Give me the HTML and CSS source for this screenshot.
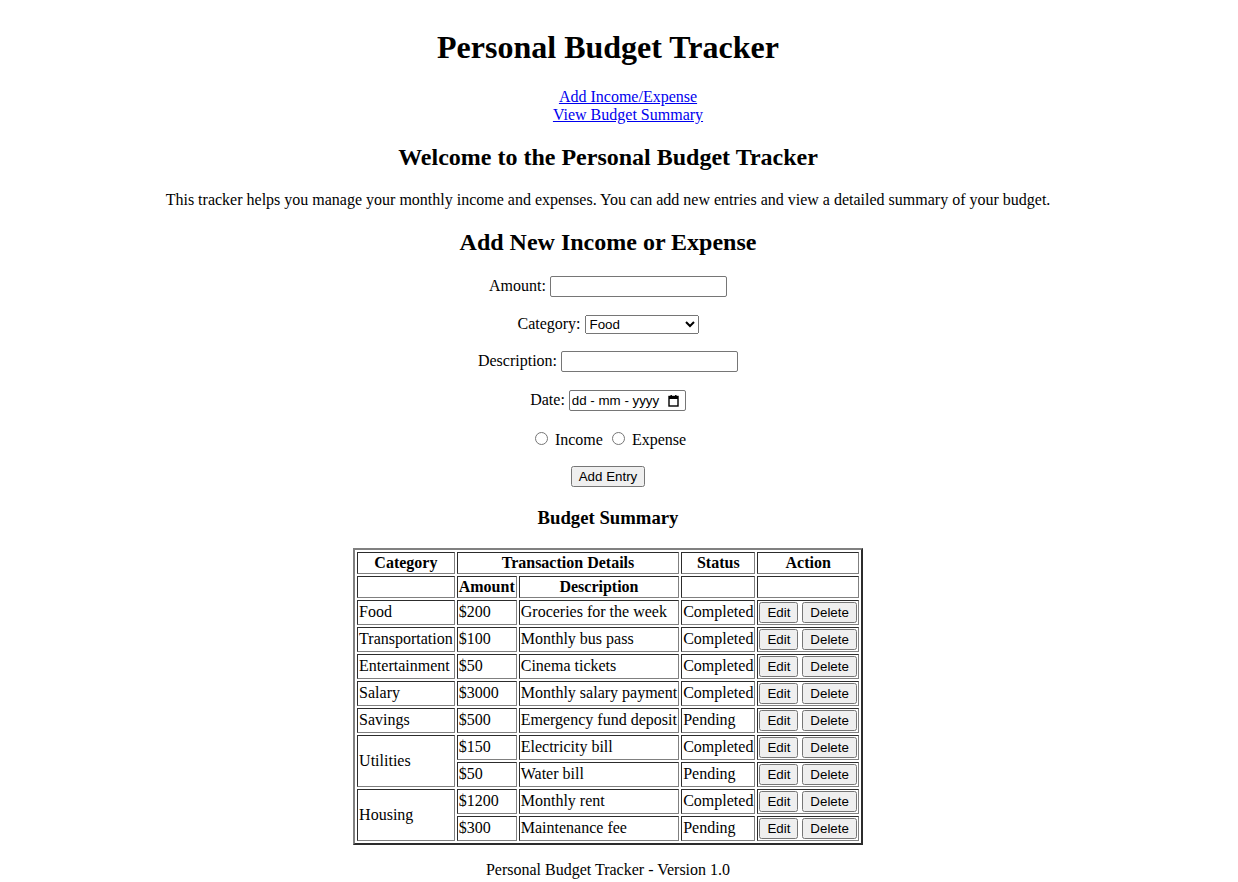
FILE: index.html
```html
<!DOCTYPE html>
<html>
<head>
<meta charset="utf-8">
<title>Personal Budget Tracker</title>
<link rel="stylesheet" href="styles.css">
</head>
<body>
<header>
<h1>Personal Budget Tracker</h1>
<nav>
<ul class="nav-list">
<li><a href="#add">Add Income/Expense</a></li>
<li><a href="#summary">View Budget Summary</a></li>
</ul>
</nav>
</header>
<main>
<section>
<h2>Welcome to the Personal Budget Tracker</h2>
<p>This tracker helps you manage your monthly income and expenses. You can add new entries and view a detailed summary of your budget.</p>
</section>
<section id="add">
<h2>Add New Income or Expense</h2>
<form>
<p class="form-row"><label for="amount">Amount:</label> <input class="text-input" type="text" id="amount"></p>
<p class="form-row"><label for="category">Category:</label> <select class="select-input" id="category">
<option>Food</option>
<option>Transportation</option>
<option>Entertainment</option>
<option>Salary</option>
<option>Savings</option>
<option>Utilities</option>
<option>Housing</option>
</select></p>
<p class="form-row"><label for="desc">Description:</label> <input class="text-input" type="text" id="desc"></p>
<p class="form-row"><label for="date">Date:</label> <span class="date-field"><input class="date-input" type="text" id="date" placeholder="dd - mm - yyyy"><svg class="cal-icon" width="11" height="12" viewBox="0 0 11 12"><rect x="1" y="1.5" width="9" height="9.5" fill="none" stroke="#000" stroke-width="1.4"/><rect x="1" y="1.5" width="9" height="2.5" fill="#000"/><rect x="2.5" y="0" width="1.4" height="2" fill="#000"/><rect x="7.1" y="0" width="1.4" height="2" fill="#000"/></svg></span></p>
<p class="form-row"><input type="radio" name="type" id="inc"> <label for="inc">Income</label> <input type="radio" name="type" id="exp"> <label for="exp">Expense</label></p>
<p class="form-row"><button class="btn" type="button">Add Entry</button></p>
</form>
</section>
<section id="summary">
<h3>Budget Summary</h3>
<table class="budget">
<thead>
<tr><th>Category</th><th colspan="2">Transaction Details</th><th>Status</th><th>Action</th></tr>
<tr><th></th><th>Amount</th><th>Description</th><th></th><th></th></tr>
</thead>
<tbody>
<tr><td>Food</td><td>$200</td><td>Groceries for the week</td><td>Completed</td><td><button class="btn">Edit</button> <button class="btn">Delete</button></td></tr>
<tr><td>Transportation</td><td>$100</td><td>Monthly bus pass</td><td>Completed</td><td><button class="btn">Edit</button> <button class="btn">Delete</button></td></tr>
<tr><td>Entertainment</td><td>$50</td><td>Cinema tickets</td><td>Completed</td><td><button class="btn">Edit</button> <button class="btn">Delete</button></td></tr>
<tr><td>Salary</td><td>$3000</td><td>Monthly salary payment</td><td>Completed</td><td><button class="btn">Edit</button> <button class="btn">Delete</button></td></tr>
<tr><td>Savings</td><td>$500</td><td>Emergency fund deposit</td><td>Pending</td><td><button class="btn">Edit</button> <button class="btn">Delete</button></td></tr>
<tr><td rowspan="2">Utilities</td><td>$150</td><td>Electricity bill</td><td>Completed</td><td><button class="btn">Edit</button> <button class="btn">Delete</button></td></tr>
<tr><td>$50</td><td>Water bill</td><td>Pending</td><td><button class="btn">Edit</button> <button class="btn">Delete</button></td></tr>
<tr><td rowspan="2">Housing</td><td>$1200</td><td>Monthly rent</td><td>Completed</td><td><button class="btn">Edit</button> <button class="btn">Delete</button></td></tr>
<tr><td>$300</td><td>Maintenance fee</td><td>Pending</td><td><button class="btn">Edit</button> <button class="btn">Delete</button></td></tr>
</tbody>
</table>
</section>
</main>
<footer>
<p>Personal Budget Tracker - Version 1.0</p>
</footer>
</body>
</html>
```
FILE: styles.css
```css
html {
  overflow-y: hidden;
}
body {
  margin: 8px 30px 8px 8px;
  font-family: "Liberation Serif", "Times New Roman", serif;
  font-size: 16px;
  text-align: center;
  color: #000;
  background: #fff;
}
.nav-list {
  list-style: none;
}
input, select, button {
  font-family: "Liberation Sans", Arial, sans-serif;
}
.form-row {
  padding: 0.8px 0;
}
.text-input {
  box-sizing: border-box;
  width: 177px;
  height: 21px;
  border: 1px solid #767676;
  border-radius: 2px;
  padding: 1px 2px;
  font-size: 13.33px;
}
.select-input {
  box-sizing: border-box;
  width: 114px;
  height: 19px;
  font-size: 13.33px;
}
.date-field {
  display: inline-flex;
  align-items: center;
  box-sizing: border-box;
  width: 117px;
  height: 21px;
  border: 1px solid #767676;
  border-radius: 2px;
  padding: 0 6px 0 2px;
}
.date-input {
  flex: 1;
  min-width: 0;
  border: 0;
  padding: 0;
  outline: none;
  font-size: 13.33px;
  color: #000;
  background: transparent;
}
.date-input::placeholder {
  color: #000;
  opacity: 1;
}
.cal-icon {
  flex: none;
}
.btn {
  font-size: 13.33px;
  padding: 1px 6px;
  height: 21px;
}
.budget {
  margin: 0 auto;
  border: 2px outset #808080;
  border-spacing: 2px;
}
.budget th,
.budget td {
  border: 1px inset #808080;
  padding: 1px;
}
.budget td {
  text-align: left;
}
```
